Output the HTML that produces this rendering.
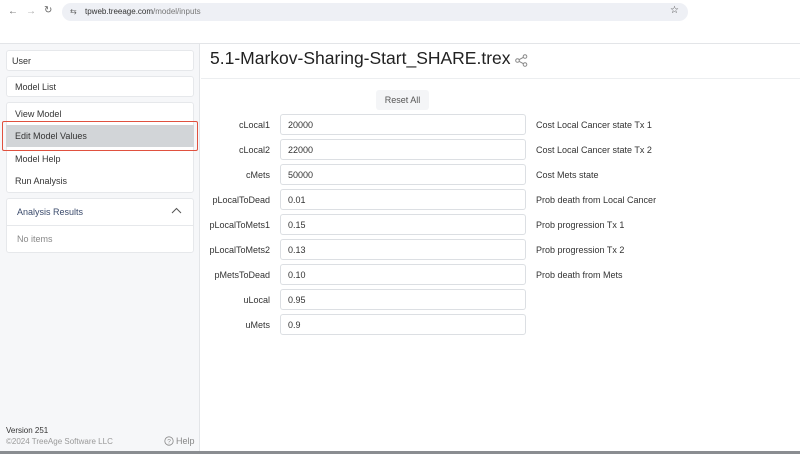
<!DOCTYPE html>
<html><head><style>
*{box-sizing:border-box;margin:0;padding:0}
body{width:800px;height:454px;overflow:hidden;font-family:"Liberation Sans",sans-serif;background:#fff;position:relative;color:#222}
.abs{position:absolute}
.card{position:absolute;left:6px;width:188px;background:#fff;border:1px solid #e6e8eb;border-radius:3px}
.it{position:absolute;left:15px;font-size:9px;color:#333}
.lbl{position:absolute;right:530px;font-size:9px;color:#333;text-align:right}
.inp{position:absolute;left:280px;width:246px;height:21px;border:1px solid #dcdfe3;border-radius:3px;font-size:9px;padding:5px 0 0 7px;color:#333}
.desc{position:absolute;left:536px;font-size:9px;color:#333}
</style></head><body>
<div class="abs" style="left:8px;top:6px;font-size:10px;color:#666">←</div>
<div class="abs" style="left:26px;top:6px;font-size:10px;color:#aaa">→</div>
<div class="abs" style="left:44px;top:5px;font-size:10px;color:#666">↻</div>
<div class="abs" style="left:62px;top:3px;width:626px;height:18px;background:#eef0f5;border-radius:9px"></div>
<div class="abs" style="left:70px;top:7px;font-size:8px;color:#666">⇆</div>
<div class="abs" style="left:85px;top:7px;font-size:8px;color:#333">tpweb.treeage.com<span style="color:#777">/model/inputs</span></div>
<div class="abs" style="left:670px;top:5px;font-size:10px;color:#444">☆</div>
<div class="abs" style="left:0;top:43px;width:800px;height:1px;background:#e3e5e8"></div>
<div class="abs" style="left:0;top:44px;width:200px;height:410px;background:#f6f7f9;border-right:1px solid #e3e5e8"></div>
<div class="card" style="top:50px;height:21px"></div><div class="it" style="left:12px;top:56px">User</div>
<div class="card" style="top:76px;height:21px"></div><div class="it" style="top:82px">Model List</div>
<div class="card" style="top:102px;height:91px"></div>
<div class="it" style="top:109px">View Model</div>
<div class="abs" style="left:6px;top:125px;width:188px;height:22px;background:#d2d5d8"></div>
<div class="abs" style="left:2px;top:121px;width:196px;height:30px;border:1.5px solid #e0513f;border-radius:2px"></div>
<div class="it" style="top:131px">Edit Model Values</div>
<div class="it" style="top:154px">Model Help</div>
<div class="it" style="top:176px">Run Analysis</div>
<div class="card" style="top:198px;height:55px"></div>
<div class="abs" style="left:6px;top:225px;width:188px;height:1px;background:#e6e8eb"></div>
<div class="it" style="left:17px;top:207px;color:#3a4a6b">Analysis Results</div>
<svg class="abs" style="left:171px;top:207px" width="11" height="7"><path d="M1 6 L5.5 1.5 L10 6" fill="none" stroke="#555" stroke-width="1"/></svg>
<div class="it" style="left:17px;top:234px;color:#888">No items</div>
<div class="abs" style="left:6px;top:426px;font-size:8px;color:#333">Version 251</div>
<div class="abs" style="left:6px;top:437px;font-size:8px;color:#999">©2024 TreeAge Software LLC</div>
<svg class="abs" style="left:164px;top:436px" width="10" height="10"><circle cx="5" cy="5" r="4.2" fill="none" stroke="#888" stroke-width=".8"/><text x="5" y="7.5" font-size="6.5" text-anchor="middle" fill="#888" font-family="Liberation Sans">?</text></svg>
<div class="abs" style="left:176px;top:436px;font-size:9px;color:#888">Help</div>
<div class="abs" style="left:0;top:451px;width:800px;height:3px;background:#8a8d91"></div>
<div class="abs" style="left:210px;top:48px;font-size:17.5px;color:#222">5.1-Markov-Sharing-Start_SHARE.trex</div>
<svg class="abs" style="left:515px;top:54px" width="13" height="13"><circle cx="10" cy="2.5" r="1.8" fill="none" stroke="#888"/><circle cx="2.5" cy="6.5" r="1.8" fill="none" stroke="#888"/><circle cx="10" cy="10.5" r="1.8" fill="none" stroke="#888"/><path d="M4 5.7L8.4 3.3M4 7.3L8.4 9.7" stroke="#888"/></svg>
<div class="abs" style="left:201px;top:78px;width:599px;height:1px;background:#eceef0"></div>
<div class="abs" style="left:376px;top:90px;width:53px;height:20px;background:#f4f5f7;border-radius:3px;font-size:9px;color:#555;text-align:center;padding-top:5px">Reset All</div>
<div class="lbl" style="top:120px">cLocal1</div><div class="inp" style="top:114px">20000</div><div class="desc" style="top:120px">Cost Local Cancer state Tx 1</div>
<div class="lbl" style="top:145px">cLocal2</div><div class="inp" style="top:139px">22000</div><div class="desc" style="top:145px">Cost Local Cancer state Tx 2</div>
<div class="lbl" style="top:170px">cMets</div><div class="inp" style="top:164px">50000</div><div class="desc" style="top:170px">Cost Mets state</div>
<div class="lbl" style="top:195px">pLocalToDead</div><div class="inp" style="top:189px">0.01</div><div class="desc" style="top:195px">Prob death from Local Cancer</div>
<div class="lbl" style="top:220px">pLocalToMets1</div><div class="inp" style="top:214px">0.15</div><div class="desc" style="top:220px">Prob progression Tx 1</div>
<div class="lbl" style="top:245px">pLocalToMets2</div><div class="inp" style="top:239px">0.13</div><div class="desc" style="top:245px">Prob progression Tx 2</div>
<div class="lbl" style="top:270px">pMetsToDead</div><div class="inp" style="top:264px">0.10</div><div class="desc" style="top:270px">Prob death from Mets</div>
<div class="lbl" style="top:295px">uLocal</div><div class="inp" style="top:289px">0.95</div>
<div class="lbl" style="top:320px">uMets</div><div class="inp" style="top:314px">0.9</div>
</body></html>
